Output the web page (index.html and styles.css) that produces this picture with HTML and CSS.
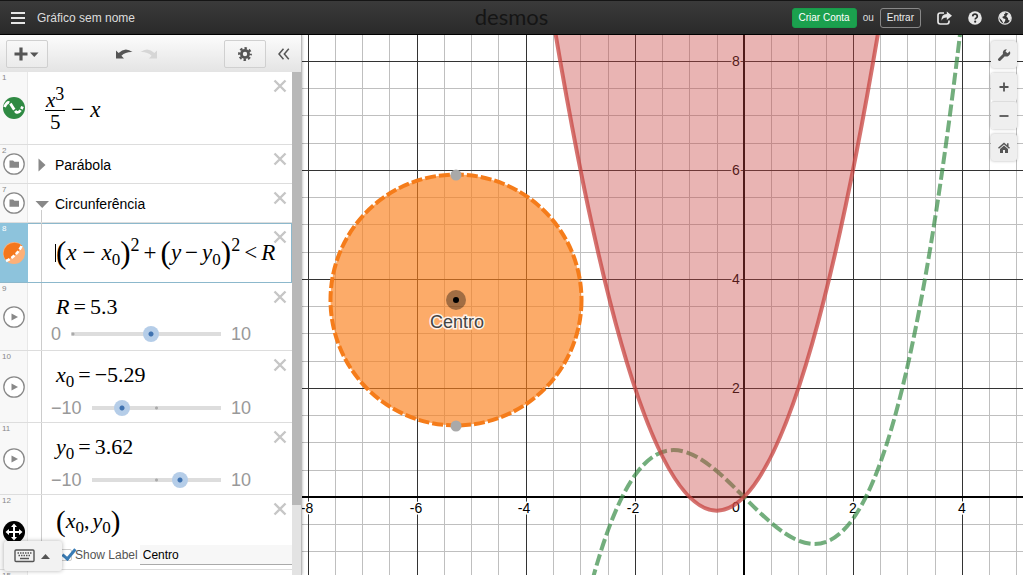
FILE: index.html
```html
<!DOCTYPE html>
<html lang="pt-BR">
<head>
<meta charset="utf-8">
<meta name="viewport" content="width=device-width, initial-scale=1">
<title>Gráfico sem nome</title>
<link rel="stylesheet" href="styles.css">
</head>
<body>
<svg class="defs" aria-hidden="true">
  <symbol id="cross" viewBox="0 0 14 14"><path d="M1.500 1.500l11 11M12.500 1.500l-11 11" stroke="#c6c6c6" stroke-width="2.400"/></symbol>
  <symbol id="play" viewBox="0 0 22 22"><circle cx="11" cy="11" r="10.200" fill="#fff" stroke="#888" stroke-width="1.300"/><path d="M8.500 7.500v7l6.500-3.500z" fill="#888"/></symbol>
  <symbol id="folder" viewBox="0 0 22 22"><circle cx="11" cy="11" r="10.200" fill="#fff" stroke="#888" stroke-width="1.300"/><path d="M6.500 7.500h3.500l1.500 1.200h4.500v6h-9.500z" fill="#888"/></symbol>
</svg>

<header class="header">
  <div class="header-side">
    <button class="bare" aria-label="Menu"><svg width="14" height="14" viewBox="0 0 14 14"><path d="M0 2h14M0 7h14M0 12h14" stroke="#e6e6e6" stroke-width="2"/></svg></button>
    <span class="graph-title">Gráfico sem nome</span>
  </div>
  <span class="logo">desmos</span>
  <div class="header-side header-right">
    <button class="account primary">Criar Conta</button>
    <span class="or">ou</span>
    <button class="account">Entrar</button>
    <button class="bare" aria-label="Compartilhar"><svg width="15" height="14" viewBox="0 0 15 14"><path d="M7 2H3.200Q1 2 1 4.200v6.600Q1 13 3.200 13h6.600Q12 13 12 10.800V9.500" fill="none" stroke="#e6e6e6" stroke-width="1.700"/><path d="M9.800 0.500L15 4.700 9.800 9V6.500Q6 6.300 4.500 9.800 4 3.300 9.800 3z" fill="#e6e6e6"/></svg></button>
    <button class="bare" aria-label="Ajuda"><svg width="14" height="14" viewBox="0 0 14 14"><circle cx="7" cy="7" r="6.800" fill="#e6e6e6"/><path d="M4.700 5.300Q4.900 3.200 7 3.200T9.300 5.200Q9.300 6.300 8.200 6.900 7.200 7.400 7.200 8.500" fill="none" stroke="#2d2d2d" stroke-width="1.700"/><circle cx="7.200" cy="10.700" r="1.100" fill="#2d2d2d"/></svg></button>
    <button class="bare" aria-label="Idioma"><svg width="14" height="14" viewBox="0 0 14 14"><circle cx="7" cy="7" r="6.200" fill="#333" stroke="#e6e6e6" stroke-width="1.200"/><path d="M2 3.500Q4 .8 6.500 1l1 1.200-1.600 1.300.6 1.200-2.300 1.200 1.200 1.500 2 .6-.3 2-1.700 2.400-1.500-2.800L2 7.500 1 5.800zM9 1.200l3 2 1.200 3.600-1.200 3-1.700-.8-.4-2-1.600-1.400 1-2 1.300-.6z" fill="#e6e6e6"/></svg></button>
  </div>
</header>

<div class="workspace">
  <aside class="panel">
    <div class="toolbar">
      <button class="tool" aria-label="Adicionar item"><svg width="26" height="14" viewBox="0 0 26 14"><path d="M7 0.500v13M.5 7h13" stroke="#555" stroke-width="3.200"/><path d="M16 5.500h8.500l-4.200 4.500z" fill="#555"/></svg></button>
      <div class="history">
        <button class="bare" aria-label="Desfazer"><svg width="18" height="12" viewBox="0 0 18 12"><path d="M1 2.500v8h8L6.400 7.700Q11 3.500 17.500 4 10 -1.500 3.600 5z" fill="#555"/></svg></button>
        <button class="bare" aria-label="Refazer"><svg width="18" height="12" viewBox="0 0 18 12"><path d="M17 2.500v8H9l2.600-2.800Q7 3.500.5 4 8-1.500 14.400 5z" fill="#d6d6d6"/></svg></button>
      </div>
      <button class="tool" aria-label="Editar lista"><svg width="14" height="14" viewBox="0 0 14 14"><circle cx="7" cy="7" r="3.600" fill="none" stroke="#555" stroke-width="2.800"/><circle cx="7" cy="7" r="5.800" fill="none" stroke="#555" stroke-width="2.200" stroke-dasharray="2.500 2.055" stroke-dashoffset="1.250"/></svg></button>
      <button class="bare collapse" aria-label="Ocultar lista"><svg width="12" height="12" viewBox="0 0 12 12"><path d="M5.500 .7L1 6l4.500 5.300M10.800 .7L6.300 6l4.500 5.300" fill="none" stroke="#555" stroke-width="1.500"/></svg></button>
    </div>

    <div class="list-area">
      <ol class="list">
        <li class="row row-first">
          <div class="gutter"><span class="num">1</span><svg class="badge" viewBox="0 0 22 22"><circle cx="11" cy="11" r="11" fill="#2f8a43"/><path d="M1.500 10Q5 2.500 8 7.500t5 7.500q3.500 2 6.500-5.500" fill="none" stroke="#fff" stroke-width="2.800" stroke-dasharray="7 1.500"/></svg></div>
          <div class="body math"><span class="frac"><span class="top"><i>x</i><sup>3</sup></span><span class="bottom">5</span></span><span class="op">−</span><i>x</i></div>
          <button class="bare remove" aria-label="Excluir 1"><svg><use href="#cross"/></svg></button>
        </li>
        <li class="row row-folder">
          <div class="gutter"><span class="num">2</span><svg class="badge"><use href="#folder"/></svg></div>
          <div class="body folder"><button class="bare toggle" aria-label="Expandir Parábola"><svg width="14" height="14" viewBox="0 0 14 14"><path d="M3.500 0.500l7 6.500-7 6.500z" fill="#888"/></svg></button><span>Parábola</span></div>
          <button class="bare remove" aria-label="Excluir 2"><svg><use href="#cross"/></svg></button>
        </li>
        <li class="row row-folder open">
          <div class="gutter"><span class="num">7</span><svg class="badge"><use href="#folder"/></svg></div>
          <div class="body folder"><button class="bare toggle" aria-label="Recolher Circunferência"><svg width="14" height="14" viewBox="0 0 14 14"><path d="M.5 4h13.500L7.200 11z" fill="#888"/></svg></button><span>Circunferência</span></div>
          <button class="bare remove" aria-label="Excluir 7"><svg><use href="#cross"/></svg></button>
        </li>
        <li class="row row-active child">
          <div class="gutter"><span class="num">8</span><svg class="badge" viewBox="0 0 22 22"><circle cx="11" cy="11" r="11" fill="#fdb078"/><path d="M3 18.500A11 11 0 0 1 19 3.500Q14 14 3 18.500z" fill="#f4761b"/><path d="M3 19Q14 14 19 3" fill="none" stroke="#fff" stroke-width="2.600" stroke-dasharray="4 2"/></svg></div>
          <div class="body math"><span class="caret"></span><span class="paren">(</span><i>x</i><span class="op">−</span><i>x</i><sub>0</sub><span class="paren">)</span><sup class="power">2</sup><span class="op tight">+</span><span class="paren">(</span><i>y</i><span class="op tight">−</span><i>y</i><sub>0</sub><span class="paren">)</span><sup class="power">2</sup><span class="op tight">&lt;</span><i>R</i></div>
          <button class="bare remove" aria-label="Excluir 8"><svg><use href="#cross"/></svg></button>
        </li>
        <li class="row row-r child">
          <div class="gutter"><button class="bare" aria-label="Animar R"><svg class="badge"><use href="#play"/></svg></button><span class="num">9</span></div>
          <div class="body param">
            <div class="math"><i>R</i><span class="op tight">=</span>5.3</div>
            <div class="slider"><span>0</span><span class="track at-start"><input type="range" aria-label="R" min="0" max="10" step="0.1" value="5.3"></span><span class="max">10</span></div>
          </div>
          <button class="bare remove" aria-label="Excluir 9"><svg><use href="#cross"/></svg></button>
        </li>
        <li class="row row-param child">
          <div class="gutter"><button class="bare" aria-label="Animar x0"><svg class="badge"><use href="#play"/></svg></button><span class="num">10</span></div>
          <div class="body param">
            <div class="math"><i>x</i><sub>0</sub><span class="op tight">=</span>−5.29</div>
            <div class="slider"><span>−10</span><span class="track"><input type="range" aria-label="x0" min="-10" max="10" step="0.01" value="-5.29"></span><span class="max">10</span></div>
          </div>
          <button class="bare remove" aria-label="Excluir 10"><svg><use href="#cross"/></svg></button>
        </li>
        <li class="row row-param child">
          <div class="gutter"><button class="bare" aria-label="Animar y0"><svg class="badge"><use href="#play"/></svg></button><span class="num">11</span></div>
          <div class="body param">
            <div class="math"><i>y</i><sub>0</sub><span class="op tight">=</span>3.62</div>
            <div class="slider"><span>−10</span><span class="track"><input type="range" aria-label="y0" min="-10" max="10" step="0.01" value="3.62"></span><span class="max">10</span></div>
          </div>
          <button class="bare remove" aria-label="Excluir 11"><svg><use href="#cross"/></svg></button>
        </li>
        <li class="row row-point child">
          <div class="gutter"><span class="num">12</span><svg class="badge" viewBox="0 0 22 22"><circle cx="11" cy="11" r="11" fill="#000"/><path d="M11 5v12M5 11h12" stroke="#fff" stroke-width="2"/><path d="M11 2.500l3 3.500H8zM11 19.500l3-3.500H8zM2.500 11L6 8v6zM19.500 11L16 8v6z" fill="#fff"/></svg></div>
          <div class="body point">
            <div class="math"><span class="paren">(</span><i>x</i><sub>0</sub>,<i class="second">y</i><sub>0</sub><span class="paren">)</span></div>
            <div class="label-line"><input type="checkbox" id="show-label" checked><label for="show-label">Show Label</label><input type="text" class="label-text" aria-label="Texto do rótulo" value="Centro"></div>
          </div>
          <button class="bare remove" aria-label="Excluir 12"><svg><use href="#cross"/></svg></button>
        </li>
        <li class="row row-last"><div class="gutter"><span class="num">15</span></div><div class="body"></div></li>
      </ol>
      <div class="scrollbar"><div class="thumb"></div></div>
    </div>
    <button class="keypad" aria-label="Abrir teclado"><svg width="38" height="14" viewBox="0 0 38 14"><rect x="1" y="1" width="19" height="11.500" rx="1" fill="none" stroke="#555" stroke-width="1.400"/><path d="M3.500 4h14M4.500 6.500h12" stroke="#555" stroke-width="1.500" stroke-dasharray="1.500 1"/><path d="M6 9.500h9" stroke="#555" stroke-width="1.500"/><path d="M27 10l4.500-5 4.500 5z" fill="#555"/></svg></button>
  </aside>

  <main class="graph">
    <svg class="plot" viewBox="0 0 721 540" preserveAspectRatio="xMinYMin slice" role="img" aria-label="Gráfico">
      <path class="minor" d="M33 0v540M60 0v540M87 0v540M142 0v540M169 0v540M196 0v540M251 0v540M278 0v540M306 0v540M360 0v540M387 0v540M415 0v540M469 0v540M496 0v540M524 0v540M578 0v540M605 0v540M633 0v540M687 0v540M714 0v540M0 53h721M0 80h721M0 108h721M0 162h721M0 189h721M0 217h721M0 271h721M0 298h721M0 326h721M0 380h721M0 407h721M0 435h721M0 489h721M0 516h721"/>
      <path class="major" d="M6 0v540M115 0v540M224 0v540M333 0v540M551 0v540M660 0v540M0 26h721M0 135h721M0 244h721M0 353h721"/>
      <path class="axis" d="M442 0v540M0 462h721"/>
      <g class="ticks">
        <text x="5" y="478">-8</text><text x="114" y="478">-6</text><text x="222" y="478">-4</text><text x="331" y="478">-2</text><text x="434" y="477">0</text><text x="551" y="478">2</text><text x="660" y="478">4</text>
        <text x="434" y="31">8</text><text x="434" y="140">6</text><text x="434" y="249">4</text><text x="434" y="358">2</text>
      </g>
      <path class="cubic" d="M278.500 592.800C414.750 -6.700 551 1233.200 687.250 -286"/>
      <path class="parabola" d="M224 -192Q414.750 1143.250 605.500 -192"/>
      <circle class="disc" cx="154" cy="265" r="125.500"/>
      <circle class="disc-edge" cx="154" cy="265" r="125.500"/>
      <circle cx="154" cy="140" r="5.500" fill="#a9a9a9"/>
      <circle cx="154" cy="391" r="5.500" fill="#a9a9a9"/>
      <circle cx="154" cy="265" r="10" fill="#000" opacity=".36"/>
      <circle cx="154" cy="265" r="3" fill="#000"/>
      <text class="point-label" x="155" y="293">Centro</text>
    </svg>
    <div class="controls">
      <button class="control" aria-label="Configurações do gráfico"><svg width="14" height="14" viewBox="0 0 14 14"><path d="M2.500 11.500L8 6" stroke="#555" stroke-width="3" stroke-linecap="round"/><path d="M12.800 3.200A3.700 3.700 0 1 1 9.800 1.200L8.500 3.500 10.500 5.200z" fill="#555"/></svg></button>
      <div class="zoom">
        <button class="control" aria-label="Ampliar"><svg width="10" height="10" viewBox="0 0 10 10"><path d="M5 .5v9M.5 5h9" stroke="#555" stroke-width="1.800"/></svg></button>
        <button class="control" aria-label="Reduzir"><svg width="10" height="10" viewBox="0 0 10 10"><path d="M.5 5h9" stroke="#555" stroke-width="1.800"/></svg></button>
      </div>
      <button class="control" aria-label="Visualização padrão"><svg width="12" height="12" viewBox="0 0 12 12"><path d="M.5 6.200L6 1.500l5.500 4.700M9.800 1.200v3" fill="none" stroke="#555" stroke-width="1.500"/><path d="M2 7l4-3.400L10 7v4H7V8H5v3H2z" fill="#555"/></svg></button>
    </div>
  </main>
</div>
</body>
</html>
```
FILE: styles.css
```css
* { box-sizing: border-box; }

body {
  margin: 0;
  height: 100vh;
  display: flex;
  flex-direction: column;
  overflow: hidden;
  font-family: "Liberation Sans", Arial, sans-serif;
  font-size: 14px;
  color: #000;
  background: #fff;
}

button, input { font: inherit; margin: 0; }
button { cursor: pointer; }
svg { display: block; }
.defs { position: absolute; width: 0; height: 0; }
.bare { padding: 0; border: 0; background: none; color: inherit; }

/* Header */
.header {
  flex: none;
  height: 35px;
  padding: 0 11px;
  display: grid;
  grid-template-columns: 1fr auto 1fr;
  align-items: center;
  background: linear-gradient(#3a3a3a, #2a2a2a);
  border-top: 1px solid #151515;
  border-bottom: 1px solid #000;
}
.header-side { display: flex; align-items: center; }
.graph-title { margin-left: 12px; font-size: 12px; color: #ddd; }
.logo { font-family: Lato, sans-serif; font-size: 22px; line-height: 28px; padding-bottom: 2px; color: #151515; }
.header-right { justify-content: flex-end; font-size: 10px; color: #ddd; }
.header-right .bare { margin-left: 16px; }
.or { margin: 0 6px; }
.account {
  height: 20px;
  padding: 0 6px;
  border: 1px solid #888;
  border-radius: 3px;
  background: none;
  color: #eee;
}
.account.primary { padding: 0 6px; border-color: #189a4a; background: #1ba04e; color: #fff; }

.workspace { flex: 1; min-height: 0; display: flex; }

/* Expression panel */
.panel {
  position: relative;
  z-index: 1;
  flex: 0 0 302px;
  display: flex;
  flex-direction: column;
  background: #fff;
  border-right: 1px solid #bbb;
  box-shadow: 0 0 3px rgba(0, 0, 0, .35);
}
.toolbar {
  flex: none;
  height: 37px;
  padding: 0 11px 0 6px;
  display: flex;
  align-items: center;
  background: linear-gradient(#fcfcfc, #e4e4e4);
}
.tool {
  width: 42px;
  height: 28px;
  padding: 0;
  display: flex;
  align-items: center;
  justify-content: center;
  border: 1px solid #d0d0d0;
  border-radius: 2px;
  background: linear-gradient(#f8f8f8, #ebebeb);
}
.history { flex: 1; display: flex; gap: 7px; justify-content: center; }
.collapse { margin-left: 12px; }

.list-area { flex: 1; min-height: 0; display: flex; }
.list { flex: 1; min-width: 0; margin: 0; padding: 0; list-style: none; overflow: hidden; }
.scrollbar { flex: 0 0 9px; background: #e3e3e3; }
.thumb { height: 86%; background: #b8b8b8; }

.row { position: relative; display: flex; border-bottom: 1px solid #ddd; }
.row-first { height: 73px; }
.row-folder { height: 39px; }
.row-active { height: 60px; }
.row-r { height: 68px; }
.row-param { height: 72px; }
.row-point { height: 75px; }
.row-last { height: 30px; }

.gutter {
  position: relative;
  flex: 0 0 28px;
  display: flex;
  align-items: center;
  justify-content: center;
  background: #f8f8f8;
  border-right: 1px solid #e8e8e8;
}
.num { position: absolute; left: 2px; top: 1px; font-size: 8px; line-height: 10px; color: #888; }
.badge { width: 22px; height: 22px; }
.body { flex: 1; min-width: 0; }
.remove { position: absolute; right: 5px; top: 7px; }
.remove svg { width: 14px; height: 14px; }

.row-active { border-bottom-color: #8cb8cc; box-shadow: inset 0 1px #8cb8cc, inset -1px 0 #8cb8cc; }
.row-active .gutter { background: #8dc3dc; border-color: #8dc3dc; }
.row-active .num { color: #fff; }

.child .body { margin-left: 13px; border-left: 1px solid #ccc; }
.open::after {
  content: "";
  position: absolute;
  left: 41px;
  bottom: 0;
  height: 12px;
  border-left: 1px solid #ccc;
}

.folder { display: flex; align-items: center; padding: 1px 0 0 7px; }
.toggle { margin-right: 6px; }

/* Math text */
.math {
  display: flex;
  align-items: center;
  font-family: "Liberation Serif", "Times New Roman", serif;
  font-size: 23px;
  line-height: 26px;
  white-space: nowrap;
}
.math sub { padding-top: 14px; font-size: 17px; line-height: 12px; }
.math sup { font-size: 18px; line-height: 18px; }
.math .op { margin: 0 6px; }
.math .tight { margin: 0 4px; }
.paren { font-size: 31px; line-height: 32px; }
.row-first .math { padding: 3px 0 0 17px; }
.frac { display: flex; flex-direction: column; align-items: center; font-size: 21px; }
.frac .top { display: flex; padding: 0 1px; border-bottom: 1px solid #000; line-height: 20px; }
.frac .top i { padding-top: 5px; }
.frac .bottom { line-height: 23px; }
.row-active .math { padding: 1px 0 0 13px; }
.row-active .power { align-self: flex-start; padding-top: 12px; }
.caret { width: 1px; height: 18px; background: #000; }

/* Sliders */
.param { display: flex; flex-direction: column; padding: 11px 0 0 14px; }
.param .math { height: 26px; font-size: 22px; }
.slider { display: flex; align-items: center; margin: 10px 41px 0 -5px; font-size: 18px; line-height: 20px; color: #999; }
.row-r .slider { margin-top: 4px; }
.max { width: 20px; }
.track {
  flex: 1;
  min-width: 0;
  margin: 0 10px;
  display: flex;
  background: radial-gradient(circle at center, #aaa 1px, transparent 2px), linear-gradient(#ddd, #ddd) center / 100% 4px no-repeat;
}
.track.at-start { background: radial-gradient(circle at 2px center, #aaa 1px, transparent 2px), linear-gradient(#ddd, #ddd) center / 100% 4px no-repeat; }
.track input {
  appearance: none;
  flex: none;
  width: calc(100% + 16px);
  height: 16px;
  margin: 0 -8px;
  background: none;
}
.track input::-webkit-slider-thumb {
  appearance: none;
  width: 16px;
  height: 16px;
  border-radius: 50%;
  background: radial-gradient(circle, #3f72b0 2px, #b5cde8 3px);
}

.row-point .gutter { align-items: flex-start; padding-top: 26px; }
.point { display: flex; flex-direction: column; }
.point .math { height: 32px; margin-top: 10px; padding-left: 14px; font-size: 22px; }
.point .paren { font-size: 29px; }
.second { margin-left: 3px; }
.label-line { display: flex; align-items: center; margin-top: 8px; padding-left: 18px; font-size: 12px; color: #555; }
.label-line input[type="checkbox"] {
  appearance: none;
  width: 12px;
  height: 12px;
  margin-right: 3px;
  border: 1px solid #ccc;
  border-radius: 2px;
}
.label-line input[type="checkbox"]:checked::after {
  content: "";
  display: block;
  width: 5px;
  height: 11px;
  margin: -4px 0 0 4px;
  border: solid #3a7cb5;
  border-width: 0 3px 3px 0;
  transform: rotate(40deg);
}
.label-text {
  flex: 1;
  min-width: 0;
  height: 20px;
  margin-left: 2px;
  padding: 0 3px;
  border: 0;
  border-bottom: 1px solid #aaa;
  background: #f7f7f7;
  color: #000;
}

.keypad {
  position: absolute;
  left: 4px;
  bottom: 4px;
  width: 58px;
  height: 30px;
  padding: 0;
  display: flex;
  align-items: center;
  justify-content: center;
  border: 0;
  border-radius: 3px;
  background: #f2f2f2;
  box-shadow: 0 0 4px rgba(0, 0, 0, .3);
}

/* Graph */
.graph { position: relative; flex: 1; min-width: 0; }
.plot { width: 100%; height: 100%; }
.minor, .major, .axis { fill: none; shape-rendering: crispEdges; }
.minor { stroke: #000; stroke-opacity: .25; }
.major { stroke: #333; }
.axis { stroke: #000; stroke-width: 2px; }
.ticks { font-size: 14px; text-anchor: middle; fill: #000; stroke: #fff; stroke-width: 3px; paint-order: stroke; }
.cubic { fill: none; stroke: #388c46; stroke-opacity: .7; stroke-width: 4px; stroke-dasharray: 12 4; }
.parabola { fill: #c74440; fill-opacity: .4; stroke: #c74440; stroke-opacity: .75; stroke-width: 4px; }
.disc { fill: #fa7e19; fill-opacity: .65; }
.disc-edge { fill: none; stroke: #f57c1a; stroke-width: 4px; stroke-dasharray: 11 3; }
.point-label { font-size: 18px; text-anchor: middle; fill: #444; stroke: #fff; stroke-width: 3px; stroke-opacity: .85; paint-order: stroke; }

.controls { position: absolute; top: 6px; right: 6px; display: flex; flex-direction: column; gap: 5px; }
.control {
  width: 26px;
  height: 27px;
  padding: 0;
  display: flex;
  align-items: center;
  justify-content: center;
  border: 0;
  border-radius: 3px;
  background: #efefef;
  box-shadow: 0 0 3px rgba(0, 0, 0, .3);
}
.zoom { display: flex; flex-direction: column; border-radius: 3px; box-shadow: 0 0 3px rgba(0, 0, 0, .3); }
.zoom .control { height: 28px; box-shadow: none; }
.zoom .control + .control { border-top: 1px solid #ddd; }
```
